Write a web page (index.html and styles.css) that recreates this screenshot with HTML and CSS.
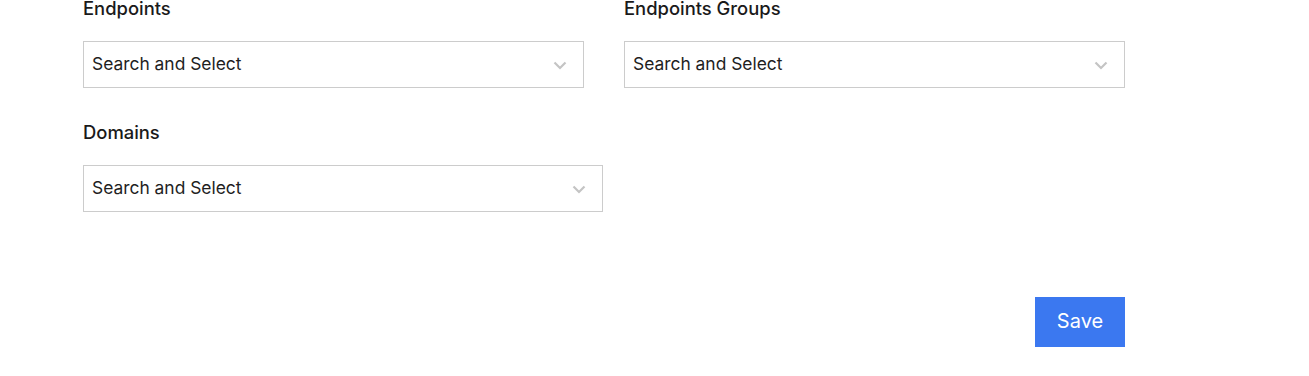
FILE: index.html
```html
<!DOCTYPE html>
<html>
<head>
<meta charset="utf-8">
<link rel="stylesheet" href="styles.css">
</head>
<body>
<div class="form">
  <div class="row row-first">
    <div class="field">
      <div class="label">Endpoints</div>
      <div class="select">
        <span class="placeholder">Search and Select</span>
        <svg class="chev" width="14" height="9" viewBox="0 0 14 9"><path d="M1.5 1.5 L7 7 L12.5 1.5" fill="none" stroke="#c4c4c4" stroke-width="2.2"/></svg>
      </div>
    </div>
    <div class="field">
      <div class="label">Endpoints Groups</div>
      <div class="select">
        <span class="placeholder">Search and Select</span>
        <svg class="chev" width="14" height="9" viewBox="0 0 14 9"><path d="M1.5 1.5 L7 7 L12.5 1.5" fill="none" stroke="#c4c4c4" stroke-width="2.2"/></svg>
      </div>
    </div>
  </div>
  <div class="row">
    <div class="field field-wide">
      <div class="label">Domains</div>
      <div class="select">
        <span class="placeholder">Search and Select</span>
        <svg class="chev" width="14" height="9" viewBox="0 0 14 9"><path d="M1.5 1.5 L7 7 L12.5 1.5" fill="none" stroke="#c4c4c4" stroke-width="2.2"/></svg>
      </div>
    </div>
  </div>
  <div class="actions">
    <button class="save">Save</button>
  </div>
</div>
</body>
</html>
```
FILE: styles.css
```css
html, body {
  margin: 0;
  padding: 0;
  background: #ffffff;
}
body {
  font-family: Inter, "Noto Sans", sans-serif;
  color: #1f1f1f;
}
.form {
  width: 1042px;
  padding-left: 83px;
}
.row {
  display: flex;
  gap: 40px;
}
.row-first {
  margin-bottom: 36px;
}
.field {
  width: 501px;
  display: flex;
  flex-direction: column;
}
.field-wide {
  width: 520px;
}
.label {
  font-size: 18.4px;
  font-weight: 500;
  line-height: 17.5px;
  margin-bottom: 23.5px;
  color: #1a1a1a;
}
.select {
  box-sizing: border-box;
  height: 47px;
  border: 1px solid #cccccc;
  display: flex;
  align-items: center;
  justify-content: space-between;
  padding: 0 16px 0 8px;
}
.placeholder {
  font-size: 17.4px;
  color: #1f1f1f;
  margin-top: -2px;
}
.chev {
  display: block;
  margin-top: 2px;
}
.actions {
  display: flex;
  justify-content: flex-end;
  margin-top: 85px;
}
.save {
  width: 90px;
  height: 50px;
  border: none;
  background: #3b78f0;
  color: #ffffff;
  font-family: Inter, "Noto Sans", sans-serif;
  font-size: 20px;
  padding: 0 0 2px 0;
}
```
